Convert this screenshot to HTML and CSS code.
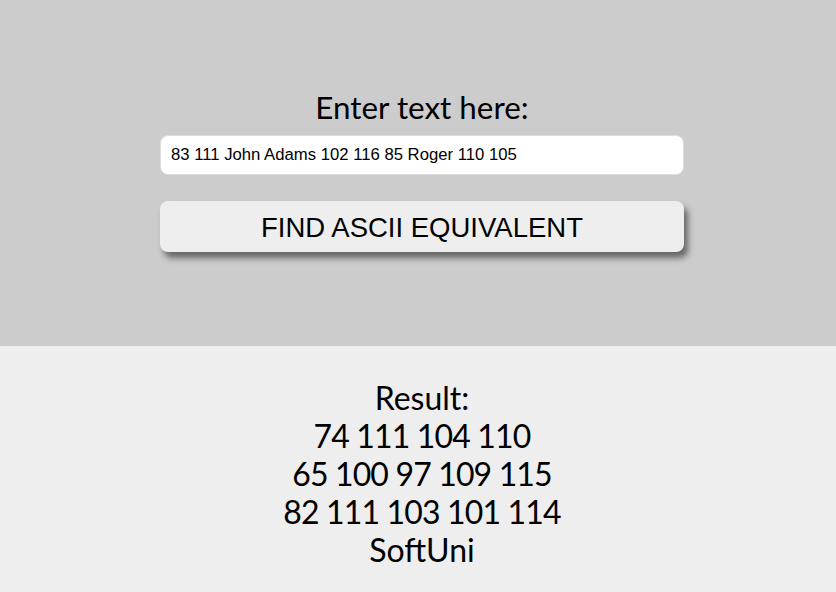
FILE: index.html
```html
<!DOCTYPE html>
<html>
<head>
<meta charset="utf-8">
<link rel="stylesheet" href="styles.css">
</head>
<body>
<section class="top">
  <h1 class="title">Enter text here:</h1>
  <input class="field" type="text" value="83 111 John Adams 102 116 85 Roger 110 105">
  <button class="btn">FIND ASCII EQUIVALENT</button>
</section>
<section class="bottom">
  <div class="line">Result:</div>
  <div class="line nums">74 111 104 110</div>
  <div class="line nums">65 100 97 109 115</div>
  <div class="line nums">82 111 103 101 114</div>
  <div class="line">SoftUni</div>
</section>
</body>
</html>
```
FILE: styles.css
```css
html, body {
  margin: 0;
  padding: 0;
  background: #eeeeee;
}
body {
  font-family: Lato, "Noto Sans", sans-serif;
  color: #000;
}
.top {
  background: #cccccc;
  padding: 88px 0 94px 8px;
  display: flex;
  flex-direction: column;
  align-items: center;
}
.title {
  margin: 0;
  font-weight: 400;
  font-size: 31.4px;
  line-height: 38px;
  height: 38px;
}
.field {
  box-sizing: border-box;
  margin-top: 9px;
  width: 524px;
  height: 40px;
  border: 1px solid #dddddd;
  border-radius: 8px;
  background: #fff;
  padding: 0 10px;
  font-family: "Liberation Sans", Arial, sans-serif;
  font-size: 16.7px;
  color: #000;
  outline: none;
}
.btn {
  box-sizing: border-box;
  margin-top: 26px;
  width: 524px;
  height: 51px;
  border: none;
  border-radius: 8px;
  background: #eeeeee;
  box-shadow: 4px 6px 6px #666666;
  font-family: "Liberation Sans", Arial, sans-serif;
  font-size: 27.5px;
  color: #000;
  padding: 2px 0 0;
}
.bottom {
  background: #eeeeee;
  padding: 33px 0 20px 8px;
  display: flex;
  flex-direction: column;
  align-items: center;
}
.line {
  font-size: 32px;
  line-height: 38px;
}
.nums {
  letter-spacing: -0.85px;
}
```
